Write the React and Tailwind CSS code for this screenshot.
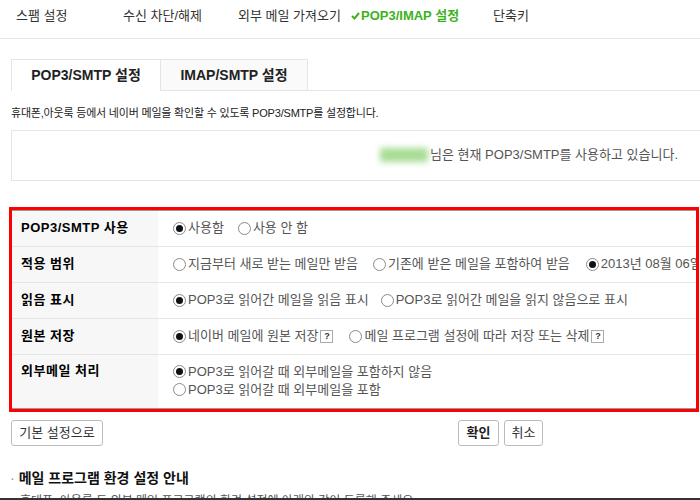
import React from 'react';

const font = { fontFamily: '"Liberation Sans", "Noto Sans CJK KR", sans-serif' };

function Radio({ checked }) {
  return (
    <span className="inline-flex items-center justify-center w-[13px] h-[13px] rounded-full border border-[#8a8a8a] bg-white mr-[2px] shrink-0">
      {checked && <span className="w-[7px] h-[7px] rounded-full bg-[#111]" />}
    </span>
  );
}

function Help() {
  return (
    <span className="inline-flex items-center justify-center w-[13px] h-[13px] border border-[#aaa] text-[9px] font-bold text-[#333] leading-none ml-[2px]">?</span>
  );
}

function Opt({ checked, children, className = '' }) {
  return (
    <span className={'inline-flex items-center whitespace-nowrap ' + className}>
      <Radio checked={checked} />
      {children}
    </span>
  );
}

function Row({ label, children, last }) {
  return (
    <div className={'flex ' + (last ? 'h-[53px]' : 'h-[36px] border-b border-[#e5e5e5]')}>
      <div className={'w-[146px] shrink-0 bg-[#f7f7f7] pl-[9px] font-bold text-[13px] tracking-[0.5px] text-black flex ' + (last ? 'pt-[6px]' : 'items-center')}>
        {label}
      </div>
      <div className={'flex-1 pl-[15px] text-[13px] text-[#555] flex ' + (last ? 'flex-col pt-[8px] leading-[18px]' : 'items-center')}>
        {children}
      </div>
    </div>
  );
}

export default function App() {
  return (
    <div className="w-[700px] h-[500px] overflow-hidden bg-white flex flex-col" style={font}>
      {/* 상단 메뉴 */}
      <div className="h-[39px] shrink-0 border-b border-[#e5e5e5] flex items-start pt-[6px] pl-[16px] text-[13px] text-[#333]">
        <span className="w-[107px]">스팸 설정</span>
        <span className="w-[115px]">수신 차단/해제</span>
        <span className="w-[113px]">외부 메일 가져오기</span>
        <span className="w-[142px] font-bold text-[#3db21c] flex items-center">
          <svg width="9" height="8" viewBox="0 0 9 8" className="mr-[1px]"><path d="M1 4 L3.5 6.5 L8 1" stroke="#3db21c" strokeWidth="2" fill="none" /></svg>
          POP3/IMAP 설정
        </span>
        <span>단축키</span>
      </div>

      {/* 탭 */}
      <div className="flex mt-[20px] pl-[11px] shrink-0">
        <div className="w-[149px] h-[32px] border-l border-t border-[#e5e5e5] bg-white flex items-center justify-center font-bold text-[14px] text-[#222]">
          POP3/SMTP 설정
        </div>
        <div className="w-[148px] h-[32px] border border-[#e5e5e5] bg-[#fafafa] flex items-center justify-center font-bold text-[14px] text-[#222]">
          IMAP/SMTP 설정
        </div>
        <div className="flex-1 border-b border-[#e5e5e5]" />
      </div>

      <p className="pl-[11px] mt-[14px] text-[11px] text-[#222] tracking-[-0.2px] shrink-0">
        휴대폰,아웃룩 등에서 네이버 메일을 확인할 수 있도록 POP3/SMTP를 설정합니다.
      </p>

      {/* 상태 */}
      <div className="ml-[11px] mt-[8px] h-[51px] shrink-0 border border-r-0 border-[#e5e5e5] flex items-center justify-end pr-[22px] text-[13px] text-[#555]">
        <span className="w-[48px] h-[14px] bg-[#a8dd95] blur-[3px] mr-[2px]" />
        님은 현재 POP3/SMTP를 사용하고 있습니다.
      </div>

      {/* 설정 표 */}
      <div className="ml-[9px] mt-[26px] w-[690px] shrink-0 border-[3px] border-[#ff0000] overflow-hidden">
        <div className="border-y border-[#999]">
          <Row label="POP3/SMTP 사용">
            <Opt checked>사용함</Opt>
            <Opt className="ml-[14px]">사용 안 함</Opt>
          </Row>
          <Row label="적용 범위">
            <Opt>지금부터 새로 받는 메일만 받음</Opt>
            <Opt className="ml-[15px]">기존에 받은 메일을 포함하여 받음</Opt>
            <Opt checked className="ml-[16px]">2013년 08월 06일</Opt>
          </Row>
          <Row label="읽음 표시">
            <Opt checked>POP3로 읽어간 메일을 읽음 표시</Opt>
            <Opt className="ml-[12px]">POP3로 읽어간 메일을 읽지 않음으로 표시</Opt>
          </Row>
          <Row label="원본 저장">
            <Opt checked>네이버 메일에 원본 저장<Help /></Opt>
            <Opt className="ml-[16px]">메일 프로그램 설정에 따라 저장 또는 삭제<Help /></Opt>
          </Row>
          <Row label="외부메일 처리" last>
            <Opt checked>POP3로 읽어갈 때 외부메일을 포함하지 않음</Opt>
            <Opt>POP3로 읽어갈 때 외부메일을 포함</Opt>
          </Row>
        </div>
      </div>

      {/* 버튼 */}
      <div className="flex items-center mt-[8px] pl-[11px] shrink-0">
        <button className="w-[92px] h-[26px] border border-[#bbb] rounded-[3px] text-[13px] text-[#333] bg-white">기본 설정으로</button>
        <div className="flex gap-[5px] ml-[355px]">
          <button className="w-[41px] h-[26px] border border-[#bbb] rounded-[3px] text-[13px] font-bold text-[#222] bg-white">확인</button>
          <button className="w-[39px] h-[26px] border border-[#bbb] rounded-[3px] text-[13px] text-[#333] bg-white">취소</button>
        </div>
      </div>

      {/* 안내 */}
      <div className="mt-auto pl-[10px] text-[14px] font-bold text-[#111] flex items-center shrink-0">
        <span className="text-[#999] font-normal mr-[4px]">·</span>
        메일 프로그램 환경 설정 안내
      </div>
      <div className="mt-[5px] pl-[20px] text-[12px] text-[#555] whitespace-nowrap h-[4px] overflow-hidden leading-[14px] shrink-0">
        휴대폰, 아웃룩 등 외부 메일 프로그램의 환경 설정에 아래와 같이 등록해 주세요.
      </div>
      <div className="h-[2px] bg-[#333] shrink-0" />
    </div>
  );
}
